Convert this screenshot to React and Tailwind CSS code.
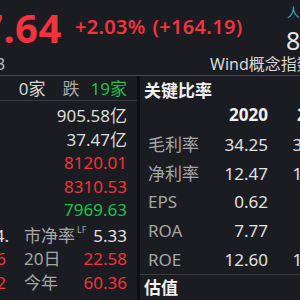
import React from 'react';

const red = 'text-[#f2333d]';
const green = 'text-[#1fc04c]';

const leftRows = [
  { value: '905.58亿', tone: 'text-[#dcdcdc]' },
  { value: '37.47亿', tone: 'text-[#dcdcdc]' },
  { value: '8120.01', tone: red },
  { value: '8310.53', tone: red },
  { value: '7969.63', tone: green },
];

const bottomRows = [
  { lead: '24.', leadTone: 'text-[#e0e0e0]', pad: '', label: '市净率', sup: 'LF', value: '5.33', tone: 'text-[#e0e0e0]' },
  { lead: '0.56', leadTone: red, pad: 'pr-[3px]', label: '20日', value: '22.58', tone: red },
  { lead: '1.02', leadTone: red, pad: 'pr-[3px]', label: '今年', value: '60.36', tone: red },
];

const ratios = [
  { label: '毛利率', a: '34.25', b: '33.86' },
  { label: '净利率', a: '12.47', b: '11.92' },
  { label: 'EPS', a: '0.62', b: '0.58' },
  { label: 'ROA', a: '7.77', b: '7.41' },
  { label: 'ROE', a: '12.60', b: '12.13' },
];

export default function App() {
  return (
    <div className="w-[300px] h-[300px] overflow-hidden bg-[#1b1c21] font-['Noto_Sans','Noto_Sans_CJK_SC',sans-serif] text-[#d8d8d8]">
      {/* quote header */}
      <div className="h-[76px] border-b border-[#46484e] flex flex-col">
        <div className="flex h-[54px] whitespace-nowrap">
          <div className="w-[95px] shrink-0 -ml-[20px] flex">
            <span className={`text-[40px] font-bold leading-[48px] mt-[4px] tracking-[0.5px] ${red}`}>7.64</span>
          </div>
          <div className={`w-[212px] shrink-0 pt-[15px] text-[20px] font-semibold leading-[24px] tracking-[0.3px] ${red}`}>
            +2.03%<span className="ml-[7px]">(+164.19)</span>
          </div>
          <div className="w-[60px] shrink-0 flex flex-col">
            <span className="text-[13px] leading-[16px] mt-[4px] text-[#2fb0c6]">人气值</span>
            <span className="text-[25px] leading-[30px] mt-[5px] -ml-[1px] text-[#e6e6e6]">862</span>
          </div>
        </div>
        <div className="flex h-[20px] items-center whitespace-nowrap">
          <div className="w-[214px] shrink-0 -ml-[4px] flex">
            <span className="text-[16px] leading-[20px] text-[#bdbdbd]">3</span>
          </div>
          <span className="shrink-0 text-[16px] leading-[20px] text-[#d8d8d8]">Wind概念指数</span>
        </div>
      </div>

      <div className="flex h-[224px]">
        {/* left market panel */}
        <div className="w-[137px] shrink-0 flex flex-col text-[17px] whitespace-nowrap">
          <div className="h-[25px] pt-[1px] pr-[10px] border-b border-[#3a3c42] flex items-center justify-end leading-[22px]">
            <span className="text-[#d6d6d6]">0家</span>
            <span className="ml-[17px] text-[#a6a6a6]">跌</span>
            <span className={`ml-[11px] ${green}`}>19家</span>
          </div>
          <div className="mt-[3px] flex flex-col">
            {leftRows.map((r) => (
              <div key={r.value} className={`h-[23.5px] pr-[10px] flex items-center justify-end leading-[23px] ${r.tone}`}>
                {r.value}
              </div>
            ))}
          </div>
          <div className="mt-[2px] flex flex-col">
            {bottomRows.map((r) => (
              <div key={r.label} className="h-[23.5px] pr-[10px] flex items-center leading-[23px]">
                <div className={`w-[9px] shrink-0 flex justify-end ${r.pad} ${r.leadTone}`}>
                  <span>{r.lead}</span>
                </div>
                <span className="ml-[15px] text-[#a6a6a6]">{r.label}</span>
                {r.sup && <span className="ml-[2px] self-start mt-[1px] text-[9px] leading-[10px] text-[#a6a6a6]">{r.sup}</span>}
                <span className={`ml-auto ${r.tone}`}>{r.value}</span>
              </div>
            ))}
          </div>
        </div>

        <div className="w-[3px] shrink-0 bg-[#0e0f12]" />

        {/* key ratios panel */}
        <div className="flex-1 flex flex-col whitespace-nowrap text-[17px]">
          <div className="h-[30px] pl-[4px] flex items-center font-bold text-[#f0f0f0] leading-[24px]">关键比率</div>
          <div className="h-[25px] flex font-bold text-[#f0f0f0] leading-[18px]">
            <span className="w-[68px] shrink-0" />
            <span className="w-[60px] shrink-0 text-right">2020</span>
            <span className="w-[68px] shrink-0 text-right">2019</span>
          </div>
          {ratios.map((r) => (
            <div key={r.label} className="h-[29px] flex items-center leading-[24px]">
              <span className="w-[68px] shrink-0 pl-[8px] text-[#a6a6a6]">{r.label}</span>
              <span className="w-[60px] shrink-0 text-right text-[#e0e0e0]">{r.a}</span>
              <span className="w-[68px] shrink-0 text-right text-[#e0e0e0]">{r.b}</span>
            </div>
          ))}
          <div className="border-t border-[#3a3c42] pt-[1px] pl-[4px] font-bold text-[#f0f0f0] leading-[24px]">估值</div>
        </div>
      </div>
    </div>
  );
}
